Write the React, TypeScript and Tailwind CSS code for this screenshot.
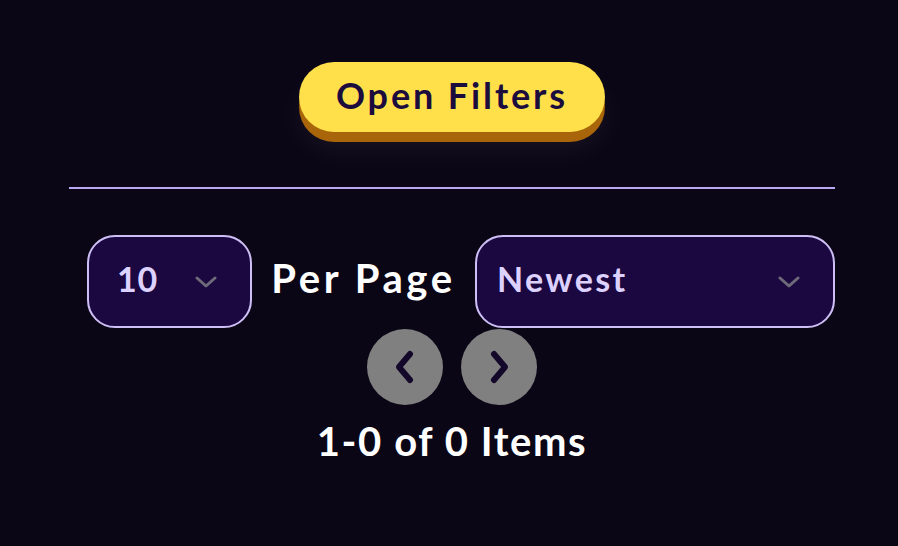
import React from 'react';

const Chevron = ({ className }: { className?: string }) => (
  <svg viewBox="0 0 24 12" className={className} fill="none" stroke="currentColor" strokeWidth={3} strokeLinecap="round" strokeLinejoin="round">
    <path d="M3 2l9 8 9-8" />
  </svg>
);

const PageArrow = ({ dir }: { dir: 'left' | 'right' }) => (
  <button className="w-[76px] h-[76px] rounded-full bg-[#808080] flex items-center justify-center text-[#14082a]">
    <svg viewBox="0 0 24 36" className="w-[24px] h-[36px]" fill="none" stroke="currentColor" strokeWidth={6} strokeLinecap="round" strokeLinejoin="round">
      {dir === 'left' ? <path d="M17 5L6 18l11 13" /> : <path d="M7 5l11 13L7 31" />}
    </svg>
  </button>
);

export default function App() {
  return (
    <div className="w-[898px] h-[546px] bg-[#0b0616] overflow-hidden font-['Lato','Noto_Sans',sans-serif]">
      <div className="ml-[69px] w-[766px] flex flex-col items-center pt-[62px]">
        <button className="w-[306px] h-[70px] rounded-full bg-[#ffe04b] text-[#1c0b3d] text-[36px] font-bold tracking-[0.08em] pb-[4px] shadow-[0_10px_0_#a8650a,0_18px_30px_rgba(255,255,255,0.06)] flex items-center justify-center">
          Open Filters
        </button>

        <div className="w-full h-[2px] bg-[#b9a9f1] mt-[55px]" />

        <div className="w-[748px] ml-[18px] mt-[46px] flex items-center">
          <div className="w-[165px] h-[93px] rounded-[28px] border-2 border-[#cdbff5] bg-[#1c0840] flex items-center pl-[28px] pr-[32px] pb-[6px] justify-between">
            <span className="text-[#ddd2ff] text-[34px] font-bold tracking-[0.02em]">10</span>
            <Chevron className="w-[24px] h-[12px] text-[#6e6a7a] mt-[6px]" />
          </div>
          <span className="flex-1 text-center text-white text-[40px] font-bold tracking-[0.09em] pb-[8px]">Per Page</span>
          <div className="w-[360px] h-[93px] rounded-[28px] border-2 border-[#cdbff5] bg-[#1c0840] flex items-center pl-[20px] pr-[32px] pb-[6px] justify-between">
            <span className="text-[#ddd2ff] text-[34px] font-bold tracking-[0.07em]">Newest</span>
            <Chevron className="w-[24px] h-[12px] text-[#6e6a7a] mt-[6px]" />
          </div>
        </div>

        <div className="flex gap-[18px] mt-[1px]">
          <PageArrow dir="left" />
          <PageArrow dir="right" />
        </div>

        <p className="text-white text-[40px] font-bold tracking-[0.04em] mt-[8px] leading-[56px]">1-0 of 0 Items</p>
      </div>
    </div>
  );
}
